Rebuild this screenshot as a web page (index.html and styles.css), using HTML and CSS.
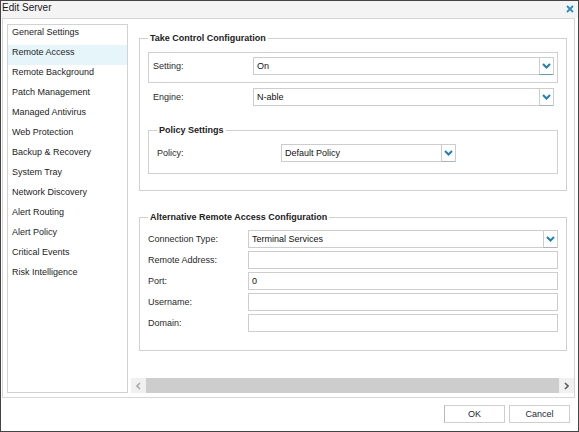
FILE: index.html
```html
<!DOCTYPE html>
<html lang="en">
  <head>
    <meta charset="UTF-8" />
    <meta name="viewport" content="width=device-width, initial-scale=1.0" />
    <title>Edit Server</title>
    <link rel="stylesheet" href="styles.css">
  </head>
  <body>
    <div class="window">
      <div class="titlebar">
        <span class="title">Edit Server</span>
        <svg class="close" width="8" height="8" viewBox="0 0 8 8">
          <path d="M1 1L7 7M7 1L1 7" stroke="#2b8cc4" stroke-width="1.8" fill="none" />
        </svg>
      </div>

      <div class="panel">
        <!-- Left navigation list -->
        <ul class="nav">
          <li>General Settings</li>
          <li class="active">Remote Access</li>
          <li>Remote Background</li>
          <li>Patch Management</li>
          <li>Managed Antivirus</li>
          <li>Web Protection</li>
          <li>Backup &amp; Recovery</li>
          <li>System Tray</li>
          <li>Network Discovery</li>
          <li>Alert Routing</li>
          <li>Alert Policy</li>
          <li>Critical Events</li>
          <li>Risk Intelligence</li>
        </ul>

        <div class="main">
          <div class="content">
            <fieldset class="group group-take">
              <legend>Take Control Configuration</legend>

              <div class="row row-focus">
                <label class="row-label">Setting:</label>
                <div class="select select-wide">
                  <span class="select-value">On</span>
                  <span class="select-btn btn-focus">
                    <svg width="9" height="6" viewBox="0 0 9 6"><polyline points="1,1 4.5,4.5 8,1" /></svg>
                  </span>
                </div>
              </div>

              <div class="row">
                <label class="row-label">Engine:</label>
                <div class="select select-wide">
                  <span class="select-value">N-able</span>
                  <span class="select-btn">
                    <svg width="9" height="6" viewBox="0 0 9 6"><polyline points="1,1 4.5,4.5 8,1" /></svg>
                  </span>
                </div>
              </div>

              <fieldset class="group group-policy">
                <legend>Policy Settings</legend>
                <div class="field">
                  <label class="policy-label">Policy:</label>
                  <div class="select select-policy">
                    <span class="select-value">Default Policy</span>
                    <span class="select-btn">
                      <svg width="9" height="6" viewBox="0 0 9 6"><polyline points="1,1 4.5,4.5 8,1" /></svg>
                    </span>
                  </div>
                </div>
              </fieldset>
            </fieldset>

            <fieldset class="group group-alt">
              <legend>Alternative Remote Access Configuration</legend>

              <div class="field">
                <label class="field-label">Connection Type:</label>
                <div class="select select-field">
                  <span class="select-value">Terminal Services</span>
                  <span class="select-btn">
                    <svg width="9" height="6" viewBox="0 0 9 6"><polyline points="1,1 4.5,4.5 8,1" /></svg>
                  </span>
                </div>
              </div>
              <div class="field">
                <label class="field-label">Remote Address:</label>
                <div class="input"></div>
              </div>
              <div class="field">
                <label class="field-label">Port:</label>
                <div class="input">0</div>
              </div>
              <div class="field">
                <label class="field-label">Username:</label>
                <div class="input"></div>
              </div>
              <div class="field">
                <label class="field-label">Domain:</label>
                <div class="input"></div>
              </div>
            </fieldset>
          </div>

          <!-- Horizontal scrollbar -->
          <div class="hscroll">
            <span class="sb-btn">
              <svg width="5" height="8" viewBox="0 0 5 8"><polyline points="4,1 1,4 4,7" stroke="#a9a9a9" /></svg>
            </span>
            <span class="sb-thumb"></span>
            <span class="sb-btn">
              <svg width="5" height="8" viewBox="0 0 5 8"><polyline points="1,1 4,4 1,7" stroke="#5f5f5f" /></svg>
            </span>
          </div>
        </div>
      </div>

      <div class="footer">
        <button class="btn btn-ok">OK</button>
        <button class="btn">Cancel</button>
      </div>
    </div>
  </body>
</html>
```

FILE: styles.css
```css
body {
  margin: 0;
  font-family: "Liberation Sans", Arial, sans-serif;
  font-size: 9px;
  color: #1c1c1c;
  background-color: #fff;
}

.window {
  width: 579px;
  height: 432px;
  box-sizing: border-box;
  border: 1px solid #444;
  display: flex;
  flex-direction: column;
}

.titlebar {
  height: 17px;
  display: flex;
  justify-content: space-between;
  align-items: flex-start;
  background-color: #f4f4f4;
}

.title {
  font-size: 10px;
  line-height: 13px;
  padding-left: 1px;
  color: #1a1a1a;
}

.close {
  margin: 4px 4px 0 0;
}

.panel {
  height: 380px;
  box-sizing: border-box;
  margin: 0 3px 0 1px;
  border: 1px solid #d6d6d6;
  display: flex;
}

/* Left list */
.nav {
  width: 121px;
  box-sizing: border-box;
  margin: 5px 3px 4px 4px;
  padding: 0;
  list-style: none;
  border: 1px solid #d2d2d2;
}

.nav li {
  height: 20px;
  box-sizing: border-box;
  padding: 1px 0 0 4px;
  line-height: 12px;
}

.nav li.active {
  background-color: #e5f5fa;
}

/* Right side */
.main {
  width: 443px;
  margin-bottom: 4px;
  display: flex;
  flex-direction: column;
}

.content {
  flex: 1;
  overflow: hidden;
  padding: 13px 0 0 8px;
}

.group {
  margin: 0;
  min-width: 0;
  box-sizing: border-box;
  border: 1px solid #d0d0d0;
}

.group legend {
  padding: 0 2px;
  font-weight: bold;
  line-height: 13px;
  color: #222;
}

.group-take {
  width: 428px;
  padding: 7px 8px 16px;
}

.group-policy {
  margin-top: 10px;
  padding: 7px 8px 11px;
}

.group-alt {
  width: 428px;
  margin-top: 20px;
  padding: 6px 8px 18px;
}

.row {
  display: flex;
  align-items: center;
  border: 1px solid transparent;
  padding: 4px 3px 7px 4px;
}

.row-focus {
  border-color: #d0d0d0;
}

.row-label {
  width: 100px;
  color: #2a2a2a;
}

.field {
  display: flex;
  align-items: center;
  margin-bottom: 3px;
}

.field:last-child {
  margin-bottom: 0;
}

.field-label {
  width: 100px;
  color: #2a2a2a;
}

.policy-label {
  width: 124px;
  color: #2a2a2a;
}

/* Dropdowns and text boxes */
.select {
  height: 18px;
  box-sizing: border-box;
  display: flex;
  border: 1px solid #cdcdcd;
  border-bottom: none;
  background-color: #fff;
}

.select-wide {
  flex: 1;
}

.select-policy {
  width: 175px;
}

.select-field {
  width: 310px;
}

.select-value {
  flex: 1;
  padding-left: 3px;
  line-height: 16px;
  border-bottom: 1px solid #cdcdcd;
  color: #111;
}

.select-btn {
  width: 13px;
  display: flex;
  align-items: center;
  justify-content: center;
  border-left: 1px solid #cdcdcd;
  border-bottom: 1px solid #a9b3c6;
}

.select-btn.btn-focus {
  border-bottom-color: #5a9ed6;
}

.select-btn polyline {
  fill: none;
  stroke: #1b7fc0;
  stroke-width: 2;
}

.input {
  width: 310px;
  height: 18px;
  box-sizing: border-box;
  border: 1px solid #cdcdcd;
  padding-left: 3px;
  line-height: 16px;
  color: #111;
}

/* Scrollbar */
.hscroll {
  height: 15px;
  display: flex;
}

.sb-btn {
  width: 15px;
  display: flex;
  align-items: center;
  justify-content: center;
  background-color: #f0f0f0;
}

.sb-btn polyline {
  fill: none;
  stroke-width: 1.6;
}

.sb-thumb {
  flex: 1;
  background-color: #cdcdcd;
}

/* Bottom buttons */
.footer {
  flex: 1;
  display: flex;
  justify-content: flex-end;
  align-items: flex-start;
  gap: 4px;
  padding: 7px 8px 0 0;
}

.btn {
  width: 61px;
  height: 18px;
  padding: 0;
  font-family: inherit;
  font-size: 9px;
  color: #1d2636;
  background-color: #fff;
  border: 1px solid #cfcfcf;
}

.btn-ok {
  border-left-color: #b8b8b8;
}
```
